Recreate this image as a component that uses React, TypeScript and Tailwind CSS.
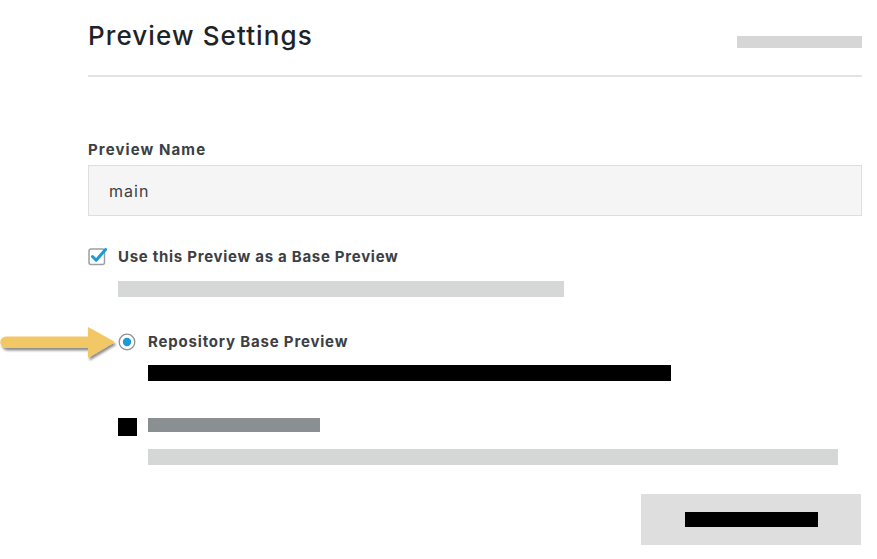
import React from 'react';

function PointerArrow() {
  return (
    <svg className="absolute left-0 top-[322px]" width="122" height="44" viewBox="0 0 122 44">
      <defs>
        <filter id="arrowShadow" x="-10%" y="-30%" width="130%" height="170%">
          <feDropShadow dx="1.5" dy="2.5" stdDeviation="1.2" floodColor="#000" floodOpacity="0.45" />
        </filter>
      </defs>
      <path
        d="M6 14.5 H88 V5 L115 20 L88 36 V26 H6 A5.75 5.75 0 0 1 6 14.5 Z"
        fill="#f2c766"
        filter="url(#arrowShadow)"
      />
    </svg>
  );
}

function CheckedBox() {
  return (
    <svg width="20" height="20" viewBox="0 0 20 20">
      <rect x="1" y="3" width="15.5" height="15.5" rx="2" fill="#fff" stroke="#9aa0a4" strokeWidth="1.5" />
      <path d="M4.5 10.5 L8.2 14.2 L17.5 3.5" fill="none" stroke="#1c9ad6" strokeWidth="3" strokeLinecap="round" strokeLinejoin="round" />
    </svg>
  );
}

function SelectedRadio() {
  return (
    <svg width="18" height="18" viewBox="0 0 18 18">
      <circle cx="9" cy="9" r="7.8" fill="#fff" stroke="#8d9397" strokeWidth="1.3" />
      <circle cx="9" cy="9" r="4.2" fill="#1c9ad6" />
    </svg>
  );
}

export default function App() {
  return (
    <div className="relative min-h-[559px] w-[877px] bg-white font-['Inter',sans-serif] text-[#3b4045]">
      <PointerArrow />

      <div className="ml-[88px] flex w-[774px] flex-col pt-[20px]">
        {/* Header */}
        <div className="flex h-[32px] items-start justify-between">
          <h1 className="text-[26px] leading-[32px] font-medium tracking-[1.1px] text-[#1e2327]">Preview Settings</h1>
          <div className="mt-[16px] h-[12px] w-[125px] bg-[#d6d6d6]" />
        </div>
        <div className="mt-[23px] h-[2px] w-full bg-[#e3e3e3]" />

        {/* Preview name */}
        <label className="mt-[63px] text-[15px] leading-[20px] font-bold tracking-[1.1px] text-[#3b4045]">Preview Name</label>
        <div className="mt-[5px] flex h-[51px] items-center border border-[#dedede] bg-[#f5f5f5] px-[20px] text-[16px] tracking-[1px] text-[#3b4045]">
          main
        </div>

        {/* Base preview checkbox */}
        <div className="mt-[31px] flex h-[20px] items-center">
          <div className="-mt-[2px] w-[30px]">
            <CheckedBox />
          </div>
          <span className="text-[15px] leading-[20px] font-bold tracking-[0.72px]">Use this Preview as a Base Preview</span>
        </div>
        <div className="mt-[14px] ml-[30px] h-[16px] w-[446px] bg-[#d6d7d7]" />

        {/* Repository base preview radio */}
        <div className="mt-[35px] ml-[30px] flex h-[20px] items-center">
          <div className="w-[30px]">
            <SelectedRadio />
          </div>
          <span className="text-[15px] leading-[20px] font-bold tracking-[0.82px]">Repository Base Preview</span>
        </div>
        <div className="mt-[13px] ml-[60px] h-[16px] w-[523px] bg-black" />

        {/* Second option (redacted) */}
        <div className="mt-[37px] ml-[30px] flex items-start gap-[11px]">
          <div className="h-[18px] w-[19px] bg-black" />
          <div className="h-[14px] w-[172px] bg-[#8a8f92]" />
        </div>
        <div className="mt-[13px] ml-[60px] h-[16px] w-[690px] bg-[#d5d7d7]" />

        {/* Save button */}
        <div className="mt-[29px] flex justify-end">
          <button className="mr-px flex h-[51px] w-[220px] items-center justify-center bg-[#dedede]">
            <span className="block h-[15px] w-[133px] bg-black" />
          </button>
        </div>
      </div>
    </div>
  );
}
